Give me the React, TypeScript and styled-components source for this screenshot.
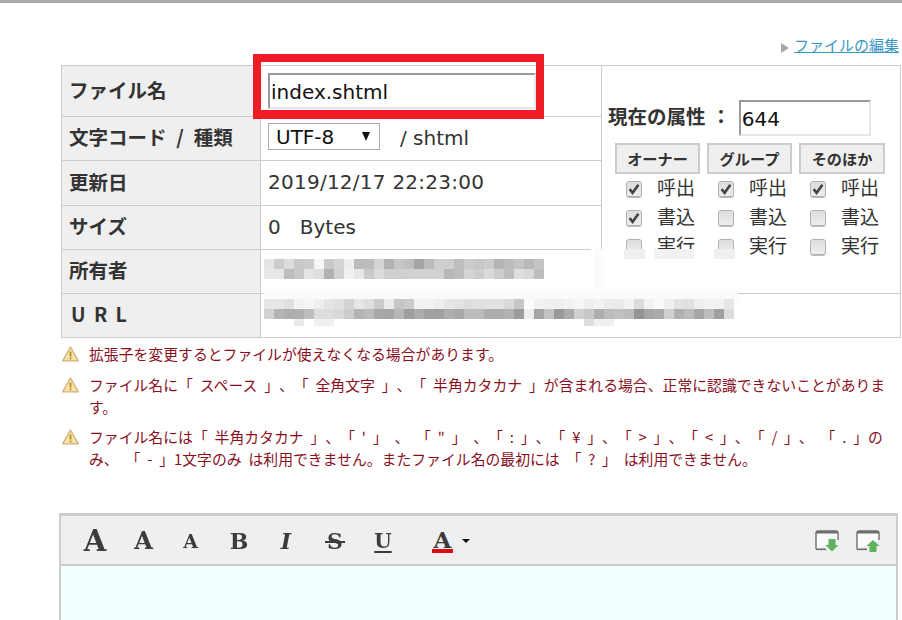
import React from "react";
import styled, { createGlobalStyle } from "styled-components";

const Global = createGlobalStyle`
  html, body { margin: 0; padding: 0; background: #fff; }
  body { width: 902px; height: 620px; overflow: hidden; font-family: "Noto Sans CJK JP", "DejaVu Sans", sans-serif; color: #333; text-spacing-trim: space-all; }
`;

const Page = styled.div`
  position: relative;
  width: 902px;
  height: 620px;
  overflow: hidden;
  border-top: 3px solid #a9a9a9;
  box-sizing: border-box;
`;

const TopLinkRow = styled.div`
  height: 62px;
  box-sizing: border-box;
  padding: 32px 3px 0 0;
  display: flex;
  justify-content: flex-end;
  align-items: flex-start;
  gap: 5px;
`;

const TopLink = styled.a`
  color: #3a97c4;
  font-size: 15px;
  line-height: 20px;
  text-decoration: underline;
`;

const Arrow = styled.span`
  width: 0;
  height: 0;
  margin-top: 8px;
  border-left: 8px solid #a8a8a8;
  border-top: 5px solid transparent;
  border-bottom: 5px solid transparent;
`;

const Body = styled.div`
  position: relative;
  margin-left: 61px;
  width: 840px;
`;

const Table = styled.div`
  display: grid;
  grid-template-columns: 199px 341px 299px;
  grid-template-rows: 51px 44px 45px 44px 44px 44px;
  box-sizing: border-box;
  border-top: 1px solid #ccc;
  border-left: 1px solid #ccc;
  width: 840px;
`;

const Label = styled.div`
  background: #efefef;
  border-right: 1px solid #ccc;
  border-bottom: 1px solid #ccc;
  display: flex;
  align-items: center;
  padding: 0 0 4px 7px;
  font-size: 19.5px;
  font-weight: 700;
  color: #333;
  white-space: pre;
  word-spacing: 0.5px;
`;

const UrlText = styled.span`
  letter-spacing: 1.7px;
  margin-left: 2px;
`;

const Value = styled.div<{ $wide?: boolean }>`
  border-right: 1px solid #ccc;
  border-bottom: 1px solid #ccc;
  display: flex;
  align-items: center;
  padding: 0 0 2px 7px;
  font-family: "DejaVu Sans", "Noto Sans CJK JP", sans-serif;
  font-size: 20px;
  color: #333;
  ${(p) => (p.$wide ? "grid-column: 2 / span 2;" : "")}
`;

const DateText = styled.span`
  letter-spacing: 0.25px;
`;

const NameInput = styled.div`
  box-sizing: border-box;
  width: 268px;
  height: 36px;
  margin-top: 1px;
  border: 2px solid #e6e6e6;
  border-top-color: #9a9a9a;
  border-left-color: #9a9a9a;
  padding: 2px 0 0 1px;
  display: flex;
  align-items: center;
  color: #111;
`;

const SelectBox = styled.div`
  box-sizing: border-box;
  width: 112px;
  height: 27px;
  border: 1px solid #aaa;
  display: flex;
  align-items: center;
  justify-content: space-between;
  padding: 0 9px 0 7px;
  color: #111;
  margin-right: 20px;
  margin-top: -2px;
`;

const Caret = styled.span`
  width: 0;
  height: 0;
  border-left: 4.5px solid transparent;
  border-right: 4.5px solid transparent;
  border-top: 9px solid #111;
`;

const AttrCell = styled.div`
  grid-column: 3;
  grid-row: 1 / span 5;
  border-right: 1px solid #ccc;
  border-bottom: 1px solid #ccc;
  padding: 34px 0 0 6px;
  box-sizing: border-box;
`;

const AttrHead = styled.div`
  display: flex;
  align-items: center;
  height: 36px;
`;

const AttrTitle = styled.span`
  font-size: 19.5px;
  font-weight: 700;
  white-space: pre;
  word-spacing: -1.5px;
  margin-bottom: 6px;
`;

const AttrInput = styled.div`
  box-sizing: border-box;
  width: 132px;
  height: 36px;
  margin-left: 8px;
  border: 2px solid #e6e6e6;
  border-top-color: #9a9a9a;
  border-left-color: #9a9a9a;
  padding: 2px 0 0 1px;
  display: flex;
  align-items: center;
  font-family: "DejaVu Sans", sans-serif;
  font-size: 20px;
  color: #111;
`;

const PermGrid = styled.div`
  display: grid;
  grid-template-columns: 85px 85px 86px;
  column-gap: 7px;
  margin: 7px 0 0 7px;
`;

const PermCol = styled.div`
  display: flex;
  flex-direction: column;
`;

const PermButton = styled.div`
  box-sizing: border-box;
  height: 31px;
  border: 2px solid #ccc;
  background: #efefef;
  display: flex;
  align-items: center;
  justify-content: center;
  padding-bottom: 1px;
  font-size: 15.2px;
  font-weight: 700;
`;

const CheckRow = styled.div`
  height: 29px;
  display: flex;
  align-items: center;
  padding-left: 11px;
  gap: 15px;
  font-size: 19px;
  color: #333;
`;

const CheckText = styled.span`
  margin-top: -4px;
`;

const Box = styled.span`
  box-sizing: border-box;
  width: 16px;
  height: 16px;
  border-radius: 3px;
  border: 1px solid #b0b0b0;
  background: linear-gradient(#dcdcdc, #eeeeee);
  box-shadow: 0 1px 0 #bbb, inset 0 0 1px #fff;
  display: flex;
  align-items: center;
  justify-content: center;
`;

const Notes = styled.div`
  margin-top: 5px;
  margin-left: 1px;
  color: #8a0f1e;
  font-size: 14.85px;
  line-height: 22px;
  word-spacing: 3.5px;
`;

const Note = styled.div<{ $gap: number }>`
  display: flex;
  gap: 10px;
  margin-bottom: ${(p) => p.$gap}px;
  white-space: pre;
`;

const NoteIcon = styled.svg`
  width: 17px;
  height: 16px;
  flex: none;
  margin-top: 3px;
`;

const Editor = styled.div`
  margin: 43px 0 0 -2px;
  width: 839px;
  box-sizing: border-box;
  border: solid #ccc;
  border-width: 3px 2px 0 2px;
  height: 110px;
  background: #f3ffff;
`;

const Toolbar = styled.div`
  height: 50px;
  box-sizing: border-box;
  background: #efefef;
  border-bottom: 2px solid #ccc;
  display: flex;
  align-items: center;
  padding: 2px 16px 0 10px;
`;

const Tool = styled.span<{ $size: number; $w: number; $italic?: boolean; $under?: boolean }>`
  width: ${(p) => p.$w}px;
  flex: none;
  text-align: center;
  font-family: "DejaVu Serif", serif;
  font-weight: 700;
  font-size: ${(p) => p.$size}px;
  line-height: 30px;
  color: #3c3c3c;
  filter: blur(0.45px);
  font-style: ${(p) => (p.$italic ? "italic" : "normal")};
  text-decoration: ${(p) => (p.$under ? "underline" : "none")};
  text-decoration-thickness: 1.5px;
  text-underline-offset: 3px;
`;

const StrikeTool = styled(Tool)`
  position: relative;
  &::after {
    content: "";
    position: absolute;
    left: 18px;
    width: 20px;
    top: 15px;
    height: 1.5px;
    background: #3c3c3c;
  }
`;

const ColorTool = styled.span`
  flex: none;
  display: flex;
  align-items: flex-start;
  gap: 9px;
  margin-left: 29px;
`;

const ColorLetter = styled.span`
  box-sizing: border-box;
  width: 21px;
  height: 23px;
  text-align: center;
  font-family: "DejaVu Serif", serif;
  font-weight: 700;
  font-size: 23px;
  line-height: 19px;
  color: #3c3c3c;
  border-bottom: 4px solid #dd0a12;
`;

const ToolCaret = styled.span`
  width: 0;
  height: 0;
  margin-top: 9px;
  border-left: 4px solid transparent;
  border-right: 4px solid transparent;
  border-top: 4px solid #111;
`;

const ToolRight = styled.div`
  margin-left: auto;
  display: flex;
  gap: 17px;
  filter: blur(0.3px);
`;

const RedFrame = styled.div`
  position: absolute;
  left: 192px;
  top: -11px;
  width: 291px;
  height: 65px;
  box-sizing: border-box;
  border: 8px solid #ee1c25;
  border-bottom-width: 9px;
  pointer-events: none;
`;

const Mosaic = styled.svg`
  position: absolute;
  left: 190px;
  top: 184px;
  width: 650px;
  height: 84px;
  pointer-events: none;
`;

const row1a = "e4 cc dc c9 cc f6 c9 d5 ee bb bd d4 b2 c6 bf a5 bb cf cf be cc c8 cc b4 bc c4 b8 c4".split(" ");
const row1b = "e8 e6 bd c8 e4 de b0 d2 f0 e6 ca da cf cf d0 d2 d2 d2 b8 bd d5 cd da cd be df d8 bd".split(" ");
const row2a = "e6 e6 df f2 f6 ef e4 e0 d4 e6 de cb ea c5 cb f2 f2 ee e6 e3 de e0 e2 e2 da c8 fc f2 f0 ef f2 f6 ee f2 ec ea f2 dc f2 fa f0 e3 e0 ee f2 f2 e6".split(" ");
const row2b = "d2 b5 ae b0 bd dd dd d8 cc b4 ba a8 a6 b6 9e ac a1 a0 ae a8 bc bc ad ae b2 9c ee a5 c2 99 ac d0 c8 ae bc c0 bc 94 a6 ab d0 b0 bb a6 bd a0 dc".split(" ");

const gray = (h: string) => `#${h}${h}${h}`;

const Tri = () => (
  <NoteIcon viewBox="0 0 17 16">
    <path d="M8.5 1 L16.3 14.8 H0.7 Z" fill="#f6e3a8" stroke="#d3ad7c" strokeWidth="1.3" strokeLinejoin="round" />
    <path d="M8.5 5.5 V10.5" stroke="#b98a2c" strokeWidth="1.8" />
    <rect x="7.6" y="11.5" width="1.8" height="1.8" fill="#b98a2c" />
  </NoteIcon>
);

const Check = () => (
  <svg width="12" height="12" viewBox="0 0 12 12">
    <path d="M1.6 6.2 L4.6 9.8 L10.4 1.8" fill="none" stroke="#444" strokeWidth="2.6" />
  </svg>
);

const WinIcon = ({ up }: { up?: boolean }) => (
  <svg width="24" height="22" viewBox="0 0 24 22">
    <path d="M1 19 V3 Q1 1 3 1 H21 Q23 1 23 3 V10" fill="#fafafa" stroke="#6e6e6e" strokeWidth="1.4" />
    <path d="M1 19.3 H11" stroke="#6e6e6e" strokeWidth="1.6" fill="none" />
    <rect x="1" y="1" width="22" height="2.4" fill="#6e6e6e" rx="1" />
    {up ? (
      <path d="M17 10 L23.5 16 H20.5 V22 H13.5 V16 H10.5 Z" fill="#5fb35f" />
    ) : (
      <path d="M13.5 9 H20.5 V15 H23.5 L17 21.5 L10.5 15 H13.5 Z" fill="#5fb35f" />
    )}
  </svg>
);

const perms: [string, boolean[]][] = [
  ["オーナー", [true, true, false]],
  ["グループ", [true, false, false]],
  ["そのほか", [true, false, false]],
];
const permLabels = ["呼出", "書込", "実行"];

export default function App() {
  return (
    <Page>
      <Global />
      <TopLinkRow>
        <Arrow />
        <TopLink>ファイルの編集</TopLink>
      </TopLinkRow>
      <Body>
        <Table>
          <Label>ファイル名</Label>
          <Value>
            <NameInput>index.shtml</NameInput>
          </Value>
          <AttrCell>
            <AttrHead>
              <AttrTitle>現在の属性  ：</AttrTitle>
              <AttrInput>644</AttrInput>
            </AttrHead>
            <PermGrid>
              {perms.map(([name, checks]) => (
                <PermCol key={name}>
                  <PermButton>{name}</PermButton>
                  {permLabels.map((l, i) => (
                    <CheckRow key={l}>
                      <Box>{checks[i] && <Check />}</Box>
                      <CheckText>{l}</CheckText>
                    </CheckRow>
                  ))}
                </PermCol>
              ))}
            </PermGrid>
          </AttrCell>
          <Label>文字コード  /  種類</Label>
          <Value>
            <SelectBox>
              UTF-8
              <Caret />
            </SelectBox>
            <span>/ shtml</span>
          </Value>
          <Label>更新日</Label>
          <Value>
            <DateText>2019/12/17 22:23:00</DateText>
          </Value>
          <Label>サイズ</Label>
          <Value>0{"\u00a0\u00a0\u00a0"}Bytes</Value>
          <Label>所有者</Label>
          <Value />
          <Label>
            <UrlText>U R L</UrlText>
          </Label>
          <Value $wide />
        </Table>
        <Mosaic viewBox="0 0 650 84">
          <rect x="340" y="0" width="147" height="44" fill="#fff" />
          <rect x="343" y="0" width="10" height="40" fill="#fbfbfb" />
          <rect x="373" y="0" width="21" height="10" fill="#efefef" />
          <rect x="403" y="0" width="40" height="10" fill="#f2f2f2" />
          <rect x="463" y="0" width="21" height="10" fill="#efefef" />
          <rect x="13" y="42" width="474" height="9" fill="#fafafa" />
          {row1a.map((c, i) => (
            <rect key={i} x={13 + i * 10} y="10" width="10" height="10" fill={gray(c)} />
          ))}
          {row1b.map((c, i) => (
            <rect key={i} x={13 + i * 10} y="20" width="10" height="10" fill={gray(c)} />
          ))}
          {row2a.map((c, i) => (
            <rect key={i} x={13 + i * 10} y="50" width="10" height="10" fill={gray(c)} />
          ))}
          {row2b.map((c, i) => (
            <rect key={i} x={13 + i * 10} y="60" width="10" height="10" fill={gray(c)} />
          ))}
          <rect x="43" y="70" width="10" height="7" fill="#eaeaea" />
          <rect x="63" y="70" width="20" height="7" fill="#f0f0f0" />
          <rect x="333" y="70" width="10" height="7" fill="#dedede" />
          <rect x="343" y="70" width="20" height="7" fill="#efefef" />
        </Mosaic>
        <RedFrame />
        <Notes>
          <Note $gap={9}>
            <Tri />
            <span>拡張子を変更するとファイルが使えなくなる場合があります。</span>
          </Note>
          <Note $gap={8}>
            <Tri />
            <span>
              ファイル名に「 スペース 」、「 全角文字 」、「 半角カタカナ 」が含まれる場合、正常に認識できないことがありま
              {"\n"}す。
            </span>
          </Note>
          <Note $gap={8}>
            <Tri />
            <span>
              ファイル名には「 半角カタカナ 」、「 ' 」 、 「 " 」 、「 : 」、「 ¥ 」、「 &gt; 」、「 &lt; 」、「 / 」、 「 . 」の
              {"\n"}み、 「 - 」1文字のみ は利用できません。またファイル名の最初には 「 ? 」 は利用できません。
            </span>
          </Note>
        </Notes>
        <Editor>
          <Toolbar>
            <Tool $size={29} $w={48}>A</Tool>
            <Tool $size={24} $w={49}>A</Tool>
            <Tool $size={19} $w={45}>A</Tool>
            <Tool $size={22} $w={52}>B</Tool>
            <Tool $size={22} $w={42} $italic>I</Tool>
            <StrikeTool $size={22} $w={56}>S</StrikeTool>
            <Tool $size={20} $w={40} $under>U</Tool>
            <ColorTool>
              <ColorLetter>A</ColorLetter>
              <ToolCaret />
            </ColorTool>
            <ToolRight>
              <WinIcon />
              <WinIcon up />
            </ToolRight>
          </Toolbar>
        </Editor>
      </Body>
    </Page>
  );
}
